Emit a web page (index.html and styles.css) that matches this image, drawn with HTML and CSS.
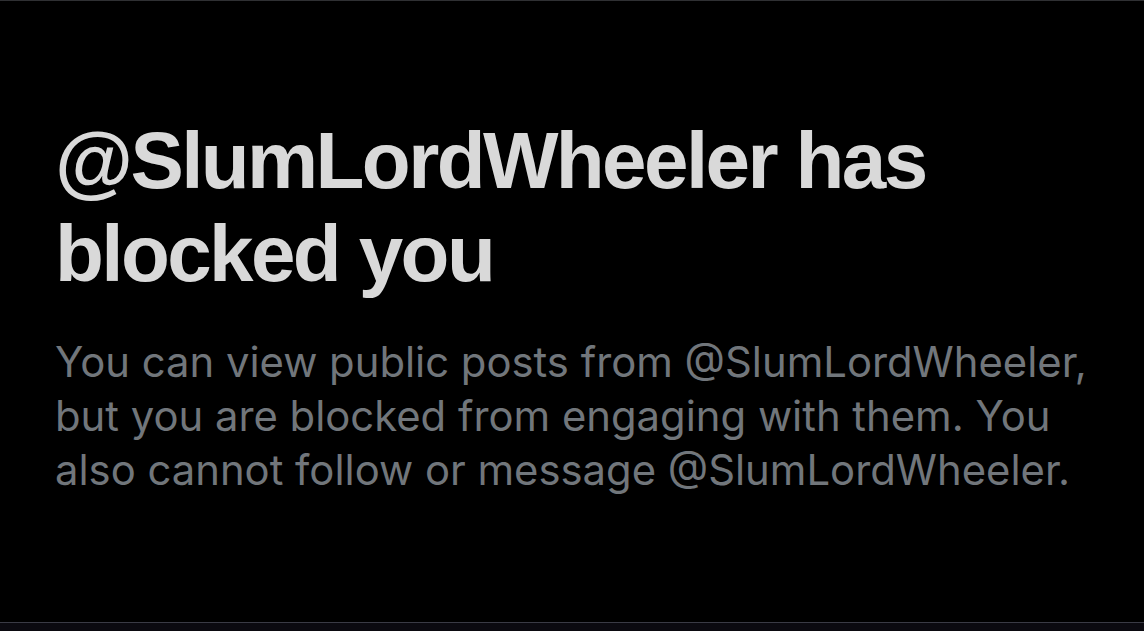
FILE: index.html
```html
<!DOCTYPE html>
<html>
<head>
<meta charset="utf-8">
<link rel="stylesheet" href="styles.css">
</head>
<body>
<div class="screen">
  <main class="content">
    <h1 class="title">@SlumLordWheeler has<br>blocked you</h1>
    <p class="desc">You can view public posts from @SlumLordWheeler,<br>but you are blocked from engaging with them. You<br>also cannot follow or message @SlumLordWheeler.</p>
  </main>
  <div class="bottom"></div>
</div>
</body>
</html>
```

FILE: styles.css
```css
html, body {
  margin: 0;
  padding: 0;
  background: #000;
}
.screen {
  width: 1144px;
  height: 631px;
  display: flex;
  flex-direction: column;
  background: #000;
  border-top: 1px solid #2f3033;
  box-sizing: border-box;
}
.content {
  flex: 1;
  padding: 113px 0 0 55px;
}
.title {
  margin: 0;
  font-family: "Liberation Sans", Arial, sans-serif;
  font-weight: 700;
  font-size: 80px;
  line-height: 93px;
  color: #d9d9d9;
  letter-spacing: -2.6px;
}
.desc {
  margin: 35px 0 0;
  font-family: Inter, "Noto Sans", sans-serif;
  font-size: 41.8px;
  line-height: 54px;
  color: #71767b;
}
.bottom {
  height: 8px;
  border-top: 1px solid #3a3b45;
  background: #0b0a10;
}
```
